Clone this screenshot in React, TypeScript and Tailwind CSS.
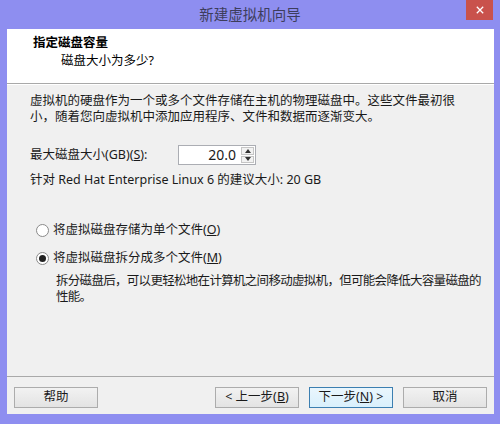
import React from "react";

const font = "font-['Noto_Sans','Noto_Sans_CJK_SC',sans-serif]";

function Btn({ children, primary }: { children: React.ReactNode; primary?: boolean }) {
  return (
    <div
      className={
        "w-[84px] h-[21px] flex items-center justify-center text-[12.5px] leading-none text-[#1a1a1a] border " +
        (primary
          ? "border-[#3c7fb1] bg-gradient-to-b from-[#eaf6fd] to-[#d9f0fc]"
          : "border-[#acacac] bg-gradient-to-b from-[#f2f2f2] to-[#e3e3e3]")
      }
    >
      {children}
    </div>
  );
}

function Radio({ checked }: { checked?: boolean }) {
  return (
    <span className="w-[13px] h-[13px] rounded-full border border-[#8a8a8a] bg-white flex items-center justify-center shrink-0">
      {checked && <span className="w-[7px] h-[7px] rounded-full bg-[#222]" />}
    </span>
  );
}

export default function App() {
  return (
    <div className={`w-[500px] h-[424px] bg-[#8e8ef0] flex flex-col ${font}`}>
      {/* title bar */}
      <div className="relative h-[29px] shrink-0 flex items-center justify-center">
        <span className="text-[14.5px] text-[#3d3d5c] leading-none pb-[1px]">新建虚拟机向导</span>
        <div className="absolute right-[7px] top-0 w-[27px] h-[20px] bg-[#c9524c] flex items-center justify-center">
          <svg viewBox="0 0 10 10" className="w-[8px] h-[8px]">
            <path d="M1 1 L9 9 M9 1 L1 9" stroke="white" strokeWidth="1.6" />
          </svg>
        </div>
      </div>

      <div className="flex-1 flex flex-col ml-[7px] mr-[6px]">
        {/* header */}
        <div className="h-[54px] bg-white pt-[6px] pl-[26px] shrink-0">
          <div className="text-[12.5px] leading-[16px] font-bold text-black">指定磁盘容量</div>
          <div className="mt-[2px] pl-[28px] text-[12.5px] leading-[16px] text-black">磁盘大小为多少?</div>
        </div>
        <div className="h-px bg-[#a9a9a9]" />
        <div className="h-px bg-white" />

        {/* body */}
        <div className="flex-1 bg-[#f0f0f0] pt-[8px] pl-[23px] text-[12.5px] leading-[16px] text-[#1a1a1a] whitespace-nowrap">
          <div>虚拟机的硬盘作为一个或多个文件存储在主机的物理磁盘中。这些文件最初很</div>
          <div>小，随着您向虚拟机中添加应用程序、文件和数据而逐渐变大。</div>

          <div className="mt-[20px] flex items-center">
            <span className="w-[148px]">
              最大磁盘大小(GB)(<u>S</u>):
            </span>
            <div className="w-[78px] h-[20px] border border-[#abadb3] bg-white flex items-center">
              <span className="flex-1 text-right pr-[4px] text-[14px]">20.0</span>
              <div className="w-[15px] h-full flex flex-col gap-[1px] p-[1px]">
                <div className="flex-1 border border-[#c5c5c5] bg-[#f2f2f2] flex items-center justify-center">
                  <svg viewBox="0 0 6 4" className="w-[6px] h-[4px]">
                    <path d="M0 4 L3 0 L6 4 Z" fill="#333" />
                  </svg>
                </div>
                <div className="flex-1 border border-[#c5c5c5] bg-[#f2f2f2] flex items-center justify-center">
                  <svg viewBox="0 0 6 4" className="w-[6px] h-[4px]">
                    <path d="M0 0 L3 4 L6 0 Z" fill="#333" />
                  </svg>
                </div>
              </div>
            </div>
          </div>

          <div className="mt-[7px]">针对 Red Hat Enterprise Linux 6 的建议大小: 20 GB</div>

          <div className="mt-[34px] flex items-center gap-[4px] pl-[6px]">
            <Radio />
            <span>
              将虚拟磁盘存储为单个文件(<u>O</u>)
            </span>
          </div>
          <div className="mt-[12px] flex items-center gap-[4px] pl-[6px]">
            <Radio checked />
            <span>
              将虚拟磁盘拆分成多个文件(<u>M</u>)
            </span>
          </div>
          <div className="mt-[7px] pl-[26px] tracking-[-0.7px]">
            <div>拆分磁盘后，可以更轻松地在计算机之间移动虚拟机，但可能会降低大容量磁盘的</div>
            <div>性能。</div>
          </div>
        </div>

        <div className="h-px bg-[#a9a9a9]" />
        {/* footer */}
        <div className="h-[37px] bg-[#f0f0f0] shrink-0 pt-[10px] px-[7px] flex items-start">
          <Btn>帮助</Btn>
          <div className="flex-1" />
          <div className="flex gap-[10px]">
            <Btn>
              &lt; 上一步(<u>B</u>)
            </Btn>
            <Btn primary>
              下一步(<u>N</u>) &gt;
            </Btn>
            <Btn>取消</Btn>
          </div>
        </div>
      </div>
      <div className="h-[10px] shrink-0" />
    </div>
  );
}
